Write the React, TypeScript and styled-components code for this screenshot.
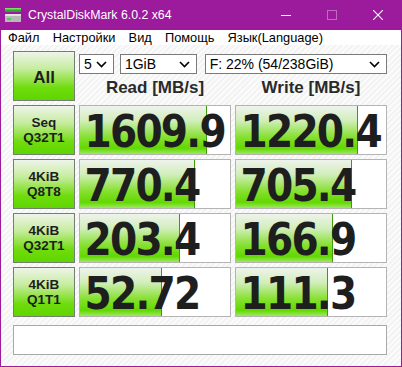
import React from 'react'
import styled, { createGlobalStyle } from 'styled-components'

const GlobalStyle = createGlobalStyle`
    html, body { margin: 0; padding: 0; background: #fff; }
    body { font-family: "Liberation Sans", Arial, sans-serif; }
`

const Window = styled.div`
    width: 402px;
    height: 367px;
    box-sizing: border-box;
    border: 1px solid #9c1a9c;
    border-top: none;
    display: flex;
    flex-direction: column;
    overflow: hidden;
`

const TitleBar = styled.div`
    height: 30px;
    background: #9c1a9c;
    display: flex;
    align-items: center;
    color: #fff;
    font-size: 12.3px;
    padding-left: 3px;
    .title { margin-left: 6px; flex: 1; }
`

const WinButton = styled.div<{ $dim?: boolean }>`
    width: 46px;
    height: 30px;
    display: flex;
    align-items: center;
    justify-content: center;
    opacity: ${p => (p.$dim ? 0.35 : 1)};
`

const MenuBar = styled.ul`
    list-style: none;
    margin: 0;
    padding: 0;
    height: 18px;
    background: #fff;
    display: flex;
    align-items: center;
    font-size: 12.8px;
    color: #000;
    li { padding: 0 6.6px; }
    li:first-child { padding-left: 7px; }
`

const Content = styled.div`
    flex: 1;
    padding: 6px 12px 8px 12px;
    background: repeating-linear-gradient(135deg, #f3f3f3 0 2px, #fbfbfb 2px 4px);
    display: grid;
    grid-template-columns: 62px 152px 152px;
    grid-auto-rows: 50px;
    column-gap: 4px;
    row-gap: 4px;
`

const GreenButton = styled.div<{ $big?: boolean }>`
    box-sizing: border-box;
    border: 1px solid #72806f;
    background: linear-gradient(to bottom, #eef5ea 0%, #c6ec9e 35%, #6fdc0c 75%, #5fd600 100%);
    display: flex;
    flex-direction: column;
    align-items: center;
    justify-content: center;
    font-weight: bold;
    color: #1e1e1e;
    font-size: ${p => (p.$big ? '17px' : '13.5px')};
    line-height: ${p => (p.$big ? '20px' : '15px')};
    padding-top: ${p => (p.$big ? '4px' : '0')};
`

const TopArea = styled.div`
    grid-column: 2 / 4;
    display: grid;
    grid-template-columns: 152px 152px;
    column-gap: 4px;
    grid-template-rows: 20px 1fr;
    padding-top: 3px;
`

const Selects = styled.div`
    grid-column: 1 / 3;
    display: flex;
    gap: 6px;
`

const Select = styled.div<{ $w: number; $ml?: number }>`
    box-sizing: border-box;
    width: ${p => p.$w}px;
    margin-left: ${p => p.$ml ?? 0}px;
    height: 20px;
    border: 1px solid #7a7a7a;
    background: #fff;
    display: flex;
    align-items: center;
    padding: 0 6px 0 4px;
    font-size: 14px;
    color: #000;
    span { flex: 1; }
`

const Header = styled.div`
    display: flex;
    align-items: center;
    justify-content: center;
    font-weight: bold;
    font-size: 17px;
    color: #2a2a2a;
    padding-top: 1px;
`

const Cell = styled.div`
    position: relative;
    box-sizing: border-box;
    border: 1px solid #b4b4b4;
    background: #fff;
`

const Bar = styled.div`
    position: absolute;
    left: 0;
    top: 0;
    bottom: 0;
    border-right: 1px solid #3f9a10;
    background: linear-gradient(to bottom, #eef3ec 0%, #d2eebb 30%, #86e030 65%, #62d800 88%, #9ee860 100%);
`

const Value = styled.div`
    position: relative;
    display: inline-block;
    font-family: "DejaVu Sans", Verdana, sans-serif;
    font-weight: bold;
    font-size: 44px;
    letter-spacing: -2px;
    color: #1e1e1e;
    line-height: 48px;
    padding-left: 5px;
    padding-top: 2px;
    transform: scaleX(0.89);
    transform-origin: left center;
    white-space: nowrap;
`

const Comment = styled.div`
    grid-column: 1 / 4;
    margin-top: 4px;
    height: 30px;
    box-sizing: border-box;
    border: 1px solid #a8a8a8;
    background: #fff;
`

const Chevron = () => (
    <svg width="11" height="7" viewBox="0 0 11 7">
        <polyline points="1,1 5.5,5.5 10,1" fill="none" stroke="#000" strokeWidth="1.6" />
    </svg>
)

const AppIcon = () => (
    <svg width="18" height="16" viewBox="0 0 18 16">
        <rect x="1" y="1" width="16" height="4" fill="#2fa52f" />
        <rect x="1" y="1" width="16" height="1.5" fill="#7fdd6f" />
        <rect x="1" y="7" width="16" height="8" fill="#b8b8b8" />
        <rect x="1" y="7" width="16" height="2" fill="#e2e2e2" />
        <rect x="3" y="11" width="4" height="2" fill="#4ad04a" />
    </svg>
)

const rows = [
    { a: 'Seq', b: 'Q32T1', read: '1609.9', rw: 126, write: '1220.4', ww: 121 },
    { a: '4KiB', b: 'Q8T8', read: '770.4', rw: 114, write: '705.4', ww: 115 },
    { a: '4KiB', b: 'Q32T1', read: '203.4', rw: 99, write: '166.9', ww: 96 },
    { a: '4KiB', b: 'Q1T1', read: '52.72', rw: 81, write: '111.3', ww: 91 },
]

const App = () => {
    return (
        <>
            <GlobalStyle />
            <Window>
                <TitleBar>
                    <AppIcon />
                    <span className="title">CrystalDiskMark 6.0.2 x64</span>
                    <WinButton>
                        <svg width="10" height="10"><line x1="0" y1="5.5" x2="10" y2="5.5" stroke="#fff" /></svg>
                    </WinButton>
                    <WinButton $dim>
                        <svg width="10" height="10"><rect x="0.5" y="0.5" width="9" height="9" fill="none" stroke="#fff" /></svg>
                    </WinButton>
                    <WinButton>
                        <svg width="10" height="10"><path d="M0 0 L10 10 M10 0 L0 10" stroke="#fff" strokeWidth="1.1" /></svg>
                    </WinButton>
                </TitleBar>
                <MenuBar>
                    <li>Файл</li>
                    <li>Настройки</li>
                    <li>Вид</li>
                    <li>Помощь</li>
                    <li>Язык(Language)</li>
                </MenuBar>
                <Content>
                    <GreenButton $big>All</GreenButton>
                    <TopArea>
                        <Selects>
                            <Select $w={35}><span>5</span><Chevron /></Select>
                            <Select $w={77}><span>1GiB</span><Chevron /></Select>
                            <Select $w={183} $ml={2}><span>F: 22% (54/238GiB)</span><Chevron /></Select>
                        </Selects>
                        <Header>Read [MB/s]</Header>
                        <Header>Write [MB/s]</Header>
                    </TopArea>
                    {rows.map((r, i) => (
                        <React.Fragment key={i}>
                            <GreenButton><span>{r.a}</span><span>{r.b}</span></GreenButton>
                            <Cell>
                                <Bar style={{ width: r.rw }} />
                                <Value>{r.read}</Value>
                            </Cell>
                            <Cell>
                                <Bar style={{ width: r.ww }} />
                                <Value>{r.write}</Value>
                            </Cell>
                        </React.Fragment>
                    ))}
                    <Comment />
                </Content>
            </Window>
        </>
    )
}

export default App
